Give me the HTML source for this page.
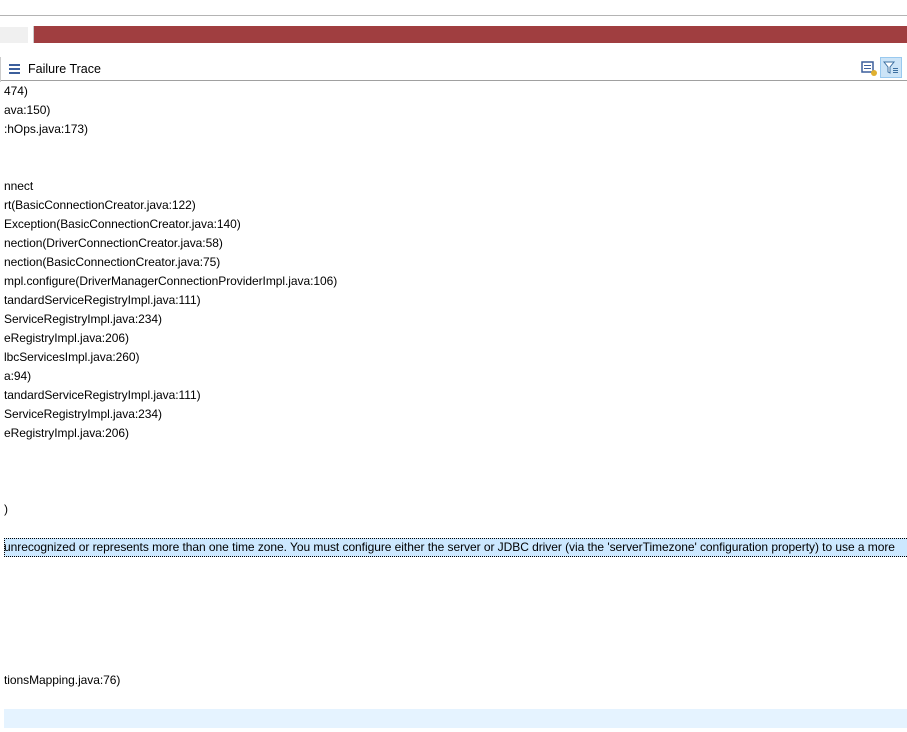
<!DOCTYPE html>
<html><head><style>
body{margin:0;width:907px;height:732px;background:#fff;position:relative;overflow:hidden;font-family:"Liberation Sans",sans-serif;font-size:12px;color:#000}
.a{position:absolute}
.l{position:absolute;left:4px;height:19px;line-height:19px;white-space:nowrap;letter-spacing:-0.05px}
</style></head><body>
<div class="a" style="left:0;top:15px;width:907px;height:1px;background:#b4b4b4"></div>
<div class="a" style="left:0;top:27px;width:28px;height:16px;background:#f0f0f0"></div>
<div class="a" style="left:33px;top:26px;width:874px;height:17px;background:#a03e40"></div>
<div class="a" style="left:33px;top:26px;width:1px;height:17px;background:#ccc"></div>
<svg class="a" style="left:9px;top:63px" width="12" height="12"><rect y="1" width="11" height="2" fill="#3c5f9c"/><rect y="5" width="11" height="2" fill="#3c5f9c"/><rect y="9" width="11" height="2" fill="#3c5f9c"/></svg>
<div class="a" style="left:28px;top:62px;font-size:12.5px">Failure Trace</div>
<svg class="a" style="left:861px;top:60px" width="18" height="18"><rect x="1" y="2" width="11" height="10" fill="#fff" stroke="#3c5f9c" stroke-width="1.5"/><rect x="3" y="5" width="7" height="1" fill="#3c5f9c"/><rect x="3" y="8" width="7" height="1" fill="#3c5f9c"/><circle cx="13" cy="13" r="3" fill="#e0b030"/></svg>
<div class="a" style="left:880px;top:57px;width:22px;height:21px;background:#cce4f7;border:1px solid #99c9ef;box-sizing:border-box"></div>
<svg class="a" style="left:883px;top:60px" width="16" height="16"><path d="M1 2h10l-4 5v6l-2-1V7z" fill="#fff" stroke="#3c6fa0"/><rect x="10" y="8" width="5" height="1" fill="#3c6fa0"/><rect x="10" y="10" width="5" height="1" fill="#3c6fa0"/><rect x="10" y="12" width="5" height="1" fill="#3c6fa0"/></svg>
<div class="a" style="left:0;top:80px;width:907px;height:1px;background:#a0a0a0"></div>
<div class="a" style="left:0;top:57px;width:1px;height:25px;background:#ccc"></div>

<div class="l" style="top:82px">474)</div>
<div class="l" style="top:101px">ava:150)</div>
<div class="l" style="top:120px">:hOps.java:173)</div>
<div class="l" style="top:177px">nnect</div>
<div class="l" style="top:196px">rt(BasicConnectionCreator.java:122)</div>
<div class="l" style="top:215px">Exception(BasicConnectionCreator.java:140)</div>
<div class="l" style="top:234px">nection(DriverConnectionCreator.java:58)</div>
<div class="l" style="top:253px">nection(BasicConnectionCreator.java:75)</div>
<div class="l" style="top:272px">mpl.configure(DriverManagerConnectionProviderImpl.java:106)</div>
<div class="l" style="top:291px">tandardServiceRegistryImpl.java:111)</div>
<div class="l" style="top:310px">ServiceRegistryImpl.java:234)</div>
<div class="l" style="top:329px">eRegistryImpl.java:206)</div>
<div class="l" style="top:348px">lbcServicesImpl.java:260)</div>
<div class="l" style="top:367px">a:94)</div>
<div class="l" style="top:386px">tandardServiceRegistryImpl.java:111)</div>
<div class="l" style="top:405px">ServiceRegistryImpl.java:234)</div>
<div class="l" style="top:424px">eRegistryImpl.java:206)</div>
<div class="l" style="top:500px">)</div>
<div class="a" style="left:4px;top:538px;width:903px;height:19px;background:#cce8ff;border:1px dotted #000;box-sizing:border-box;border-right:none"></div>
<div class="l" style="top:538px;letter-spacing:-0.05px">unrecognized or represents more than one time zone. You must configure either the server or JDBC driver (via the 'serverTimezone' configuration property) to use a more</div>
<div class="l" style="top:671px">tionsMapping.java:76)</div>
<div class="a" style="left:4px;top:709px;width:903px;height:19px;background:#e5f3ff"></div>
</body></html>
